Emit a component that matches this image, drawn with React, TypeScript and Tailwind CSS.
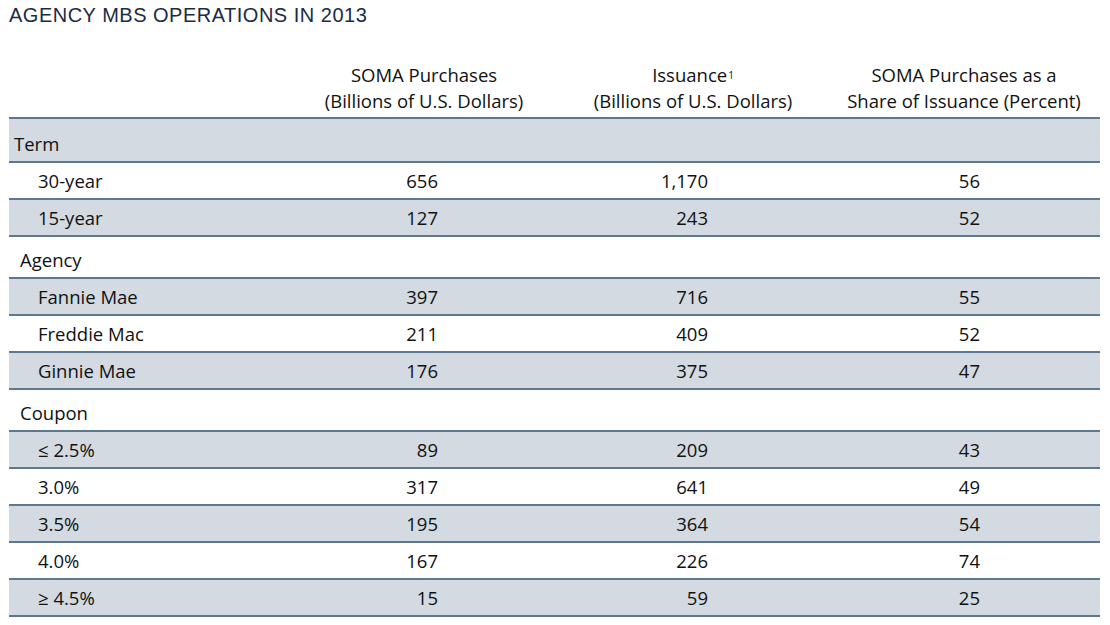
const rows: { kind: "group" | "item"; label: string; values?: string[]; shaded?: boolean; first?: boolean }[] = [
  { kind: "group", label: "Term", shaded: true, first: true },
  { kind: "item", label: "30-year", values: ["656", "1,170", "56"] },
  { kind: "item", label: "15-year", values: ["127", "243", "52"], shaded: true },
  { kind: "group", label: "Agency" },
  { kind: "item", label: "Fannie Mae", values: ["397", "716", "55"], shaded: true },
  { kind: "item", label: "Freddie Mac", values: ["211", "409", "52"] },
  { kind: "item", label: "Ginnie Mae", values: ["176", "375", "47"], shaded: true },
  { kind: "group", label: "Coupon" },
  { kind: "item", label: "\u2264 2.5%", values: ["89", "209", "43"], shaded: true },
  { kind: "item", label: "3.0%", values: ["317", "641", "49"] },
  { kind: "item", label: "3.5%", values: ["195", "364", "54"], shaded: true },
  { kind: "item", label: "4.0%", values: ["167", "226", "74"] },
  { kind: "item", label: "\u2265 4.5%", values: ["15", "59", "25"], shaded: true },
];

export default function App() {
  return (
    <div className="w-[1110px] h-[625px] bg-white text-[#111111] font-['Open_Sans',sans-serif] font-medium overflow-hidden">
      <h1 className="pl-[9px] pt-[1px] h-[30px] text-[20px] leading-[28px] text-[#1b2b44] font-normal font-['Liberation_Sans',sans-serif] tracking-[0.5px]">
        AGENCY MBS OPERATIONS IN 2013
      </h1>
      <table className="ml-[9px] w-[1091px] table-fixed border-collapse text-[18.5px]">
        <colgroup>
          <col className="w-[281px]" />
          <col className="w-[268px]" />
          <col className="w-[270px]" />
          <col className="w-[272px]" />
        </colgroup>
        <thead>
          <tr className="h-[88px] border-b-2 border-[#5f7892] leading-[26px]">
            <th></th>
            <th className="align-bottom pb-[3px] font-medium text-center">
              SOMA Purchases
              <br />
              (Billions of U.S. Dollars)
            </th>
            <th className="align-bottom pb-[3px] font-medium text-center">
              Issuance<sup className="text-[10px] relative -top-[3px] ml-[1px]">1</sup>
              <br />
              (Billions of U.S. Dollars)
            </th>
            <th className="align-bottom pb-[3px] font-medium text-center">
              SOMA Purchases as a
              <br />
              Share of Issuance (Percent)
            </th>
          </tr>
        </thead>
        <tbody>
          {rows.map((row) => (
            <tr
              key={row.label}
              className={`border-b-2 border-[#5f7892] ${row.shaded ? "bg-[#d3dae1]" : "bg-white"} ${
                row.kind === "group" ? (row.first ? "h-[44px]" : "h-[42px]") : "h-[37px]"
              }`}
            >
              {row.kind === "group" ? (
                <td colSpan={4} className={`align-bottom pb-[3px] ${row.first ? "pl-[5px]" : "pl-[11px]"}`}>
                  {row.label}
                </td>
              ) : (
                <>
                  <td className="pl-[29px]">{row.label}</td>
                  {row.values!.map((v, i) => (
                    <td key={i} className="text-right pr-[120px]">
                      {v}
                    </td>
                  ))}
                </>
              )}
            </tr>
          ))}
        </tbody>
      </table>
    </div>
  );
}
